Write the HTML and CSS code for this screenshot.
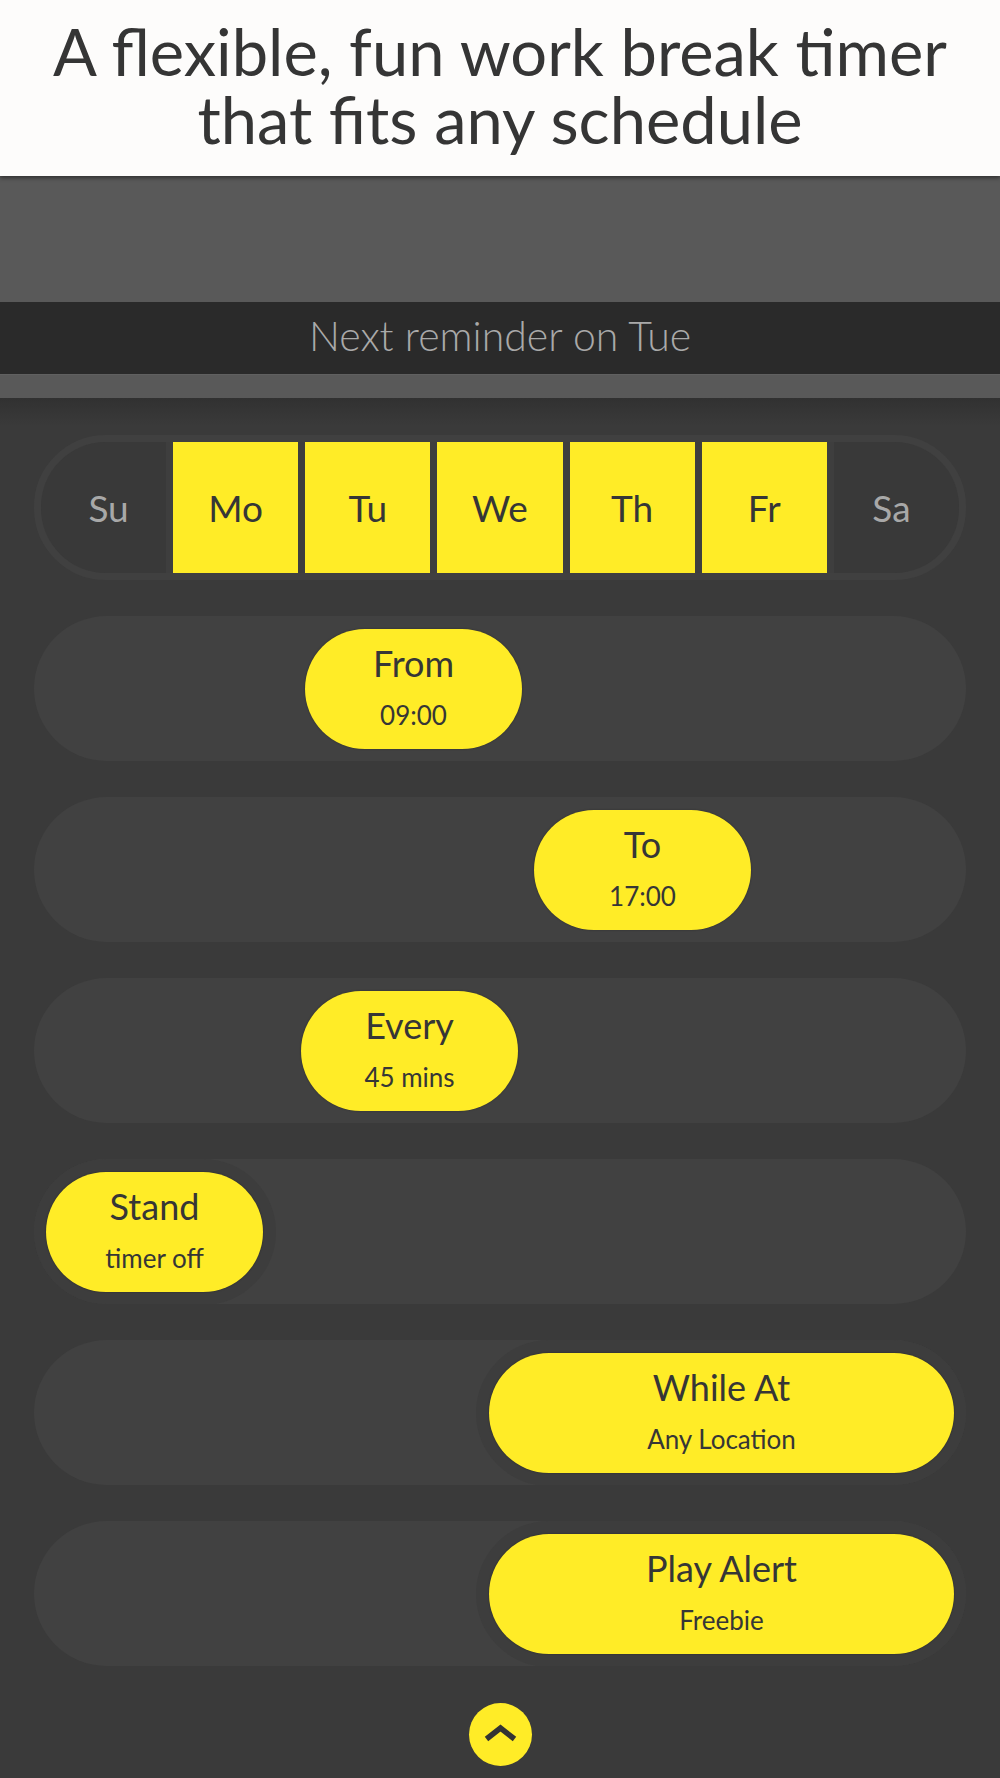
FILE: index.html
```html
<!DOCTYPE html>
<html lang="en">
<head>
    <meta charset="UTF-8">
    <meta name="viewport" content="width=device-width, initial-scale=1.0">
    <title>Stand Timer</title>
    <link rel="stylesheet" href="styles.css">
</head>
<body>
    <header class="hero">
        <h1 class="hero-title">A flexible, fun work break timer<br>that fits any schedule</h1>
    </header>
    <div class="toolbar"></div>
    <div class="next-bar">Next reminder on Tue</div>
    <div class="sub-bar"></div>

    <main class="settings">
        <div class="days">
            <div class="day">Su</div>
            <div class="day on">Mo</div>
            <div class="day on">Tu</div>
            <div class="day on">We</div>
            <div class="day on">Th</div>
            <div class="day on">Fr</div>
            <div class="day">Sa</div>
        </div>

        <div class="row">
            <div class="knob" style="margin-left: 259px">
                <span class="knob-title">From</span>
                <span class="knob-value">09:00</span>
            </div>
        </div>

        <div class="row">
            <div class="knob" style="margin-left: 488px">
                <span class="knob-title">To</span>
                <span class="knob-value">17:00</span>
            </div>
        </div>

        <div class="row">
            <div class="knob" style="margin-left: 255px">
                <span class="knob-title">Every</span>
                <span class="knob-value">45 mins</span>
            </div>
        </div>

        <div class="row">
            <div class="knob edge">
                <span class="knob-title">Stand</span>
                <span class="knob-value">timer off</span>
            </div>
        </div>

        <div class="row">
            <div class="knob edge wide">
                <span class="knob-title">While At</span>
                <span class="knob-value">Any Location</span>
            </div>
        </div>

        <div class="row">
            <div class="knob edge wide">
                <span class="knob-title">Play Alert</span>
                <span class="knob-value">Freebie</span>
            </div>
        </div>

        <button class="collapse" aria-label="Collapse">
            <svg width="63" height="63" viewBox="0 0 63 63">
                <polyline points="17.5,36 31.5,25 45.5,36" fill="none" stroke="#333" stroke-width="5.5"/>
            </svg>
        </button>
    </main>
</body>
</html>
```

FILE: styles.css
```css
body {
    margin: 0;
    padding: 0;
    background: #3a3a3a;
    font-family: Lato, "Noto Sans", sans-serif;
    color: #363636;
}
.hero {
    position: relative;
    z-index: 1;
    height: 176px;
    box-sizing: border-box;
    padding-top: 17px;
    background: #fdfcfb;
    box-shadow: 0 2px 4px rgba(0, 0, 0, 0.45);
}
.hero-title {
    margin: 0;
    font-size: 65px;
    font-weight: 400;
    line-height: 68px;
    text-align: center;
    color: #353535;
}
.toolbar {
    height: 126px;
    background: #595959;
}
.next-bar {
    height: 72px;
    line-height: 67px;
    background: #2a2a2a;
    color: #a9a9a9;
    font-size: 41px;
    font-weight: 300;
    text-align: center;
}
.sub-bar {
    height: 23px;
    background: #595959;
    border-top: 1px solid #606060;
}
.settings {
    display: flex;
    flex-direction: column;
    gap: 36px;
    padding: 37px 34px 12px;
    background: linear-gradient(#313131, #3a3a3a 28px);
}
.days {
    display: grid;
    grid-template-columns: repeat(7, 1fr);
    column-gap: 7px;
    height: 131px;
    border: 7px solid #404040;
    border-radius: 72px;
    background: #3e3e3e;
    overflow: hidden;
}
.day {
    display: flex;
    align-items: center;
    justify-content: center;
    background: #393939;
    color: #a8a8a8;
    font-size: 37px;
}
.day:first-child {
    padding-left: 10px;
}
.day:last-child {
    padding-right: 10px;
}
.day.on {
    background: #ffec27;
    color: #363636;
}
.row {
    display: flex;
    align-items: center;
    height: 145px;
    padding: 0 12px;
    border-radius: 73px;
    background: #414141;
    overflow: hidden;
}
.knob {
    display: flex;
    flex-direction: column;
    align-items: center;
    flex-shrink: 0;
    width: 217px;
    height: 120px;
    box-sizing: border-box;
    padding-top: 12px;
    border-radius: 60px;
    background: #ffec27;
    box-shadow: 0 0 2px rgba(0, 0, 0, 0.35);
}
.knob.edge {
    box-shadow: 0 0 2px rgba(0, 0, 0, 0.35), 0 0 0 13px #3d3d3d;
}
.knob.wide {
    width: 465px;
    margin-left: auto;
}
.knob-title {
    font-size: 36px;
    line-height: 44px;
}
.knob-value {
    margin-top: 15px;
    font-size: 26px;
    line-height: 30px;
}
.collapse {
    align-self: center;
    width: 63px;
    height: 63px;
    margin-top: 1px;
    padding: 0;
    border: none;
    border-radius: 50%;
    background: #ffec27;
    cursor: pointer;
}
.collapse svg {
    display: block;
}
```
